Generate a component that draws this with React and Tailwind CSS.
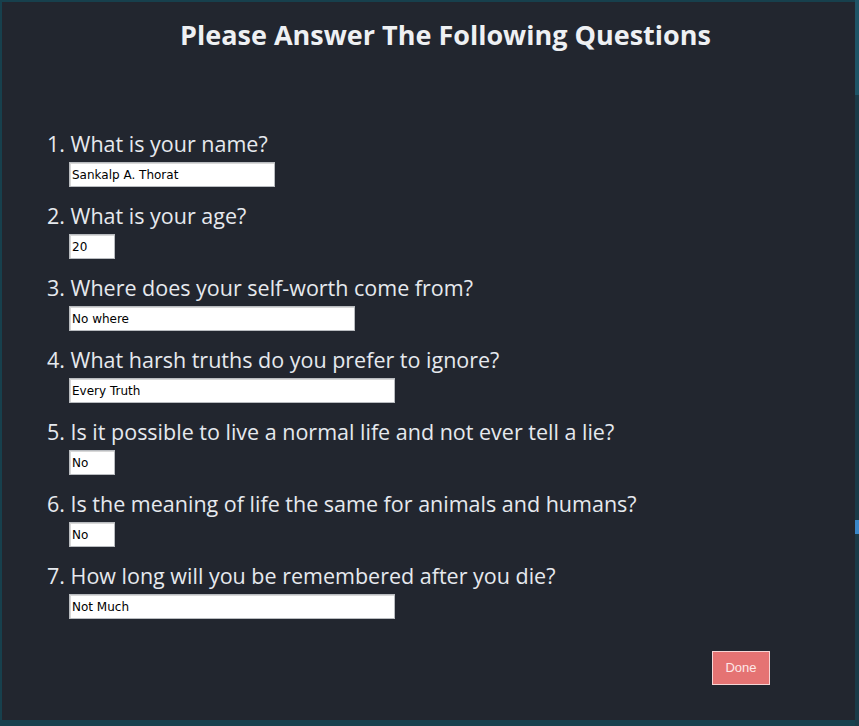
import React from "react";

const questions = [
  { q: "1. What is your name?", a: "Sankalp A. Thorat", w: "w-[206px]" },
  { q: "2. What is your age?", a: "20", w: "w-[46px]" },
  { q: "3. Where does your self-worth come from?", a: "No where", w: "w-[286px]" },
  { q: "4. What harsh truths do you prefer to ignore?", a: "Every Truth", w: "w-[326px]" },
  { q: "5. Is it possible to live a normal life and not ever tell a lie?", a: "No", w: "w-[46px]" },
  { q: "6. Is the meaning of life the same for animals and humans?", a: "No", w: "w-[46px]" },
  { q: "7. How long will you be remembered after you die?", a: "Not Much", w: "w-[326px]" },
];

export default function App() {
  return (
    <div className="w-[859px] h-[726px] bg-[#17404d] flex overflow-hidden">
      <div className="mt-[2px] ml-[2px] w-[853px] h-[718px] bg-[#22262f] flex flex-col">
        <h1
          className="mt-[15px] h-[36px] leading-[36px] text-center text-[27px] font-bold text-[#eef0f3] pl-[34px]"
          style={{ fontFamily: '"Open Sans", sans-serif' }}
        >
          Please Answer The Following Questions
        </h1>
        <div className="mt-[76px] flex flex-col">
          {questions.map((item, i) => (
            <div key={i} className="flex flex-col h-[72px]">
              <div
                className="h-[30px] leading-[30px] pl-[45px] text-[21.5px] text-[#e6e9ee]"
                style={{ fontFamily: '"Open Sans", sans-serif' }}
              >
                {item.q}
              </div>
              <div className="mt-[3px] pl-[67px]">
                <div
                  className={`${item.w} h-[25px] bg-white border border-[#b9bcc0] shadow-[inset_1px_1px_0_#d8d8d8] flex items-center pl-[2px] text-[12px] text-black`}
                  style={{ fontFamily: '"DejaVu Sans", sans-serif' }}
                >
                  {item.a}
                </div>
              </div>
            </div>
          ))}
        </div>
        <div className="mt-[18px] flex justify-end pr-[85px]">
          <button
            className="w-[58px] h-[34px] bg-[#e57373] border border-[#f6d4d4] text-[#fde8e8] text-[13px]"
            style={{ fontFamily: '"Liberation Sans", sans-serif' }}
          >
            Done
          </button>
        </div>
      </div>
      <div className="flex-1 flex flex-col bg-[#1b3a47]">
        <div className="h-[95px] bg-[#1f5466]" />
        <div className="h-[200px]" />
        <div className="h-[225px]" />
        <div className="h-[14px] bg-[#3a86c8]" />
      </div>
    </div>
  );
}
